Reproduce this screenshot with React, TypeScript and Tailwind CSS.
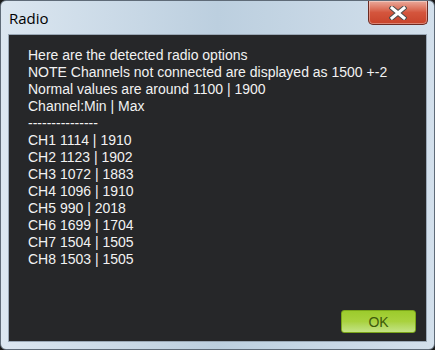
import React from 'react';

const lines = [
  'Here are the detected radio options',
  'NOTE Channels not connected are displayed as 1500 +-2',
  'Normal values are around 1100 | 1900',
  'Channel:Min | Max',
  '---------------',
  'CH1 1114 | 1910',
  'CH2 1123 | 1902',
  'CH3 1072 | 1883',
  'CH4 1096 | 1910',
  'CH5 990 | 2018',
  'CH6 1699 | 1704',
  'CH7 1504 | 1505',
  'CH8 1503 | 1505',
];

const CloseButton: React.FC = () => (
  <div className="w-[60px] h-[24px] rounded-b-[5px] border border-t-0 border-[#6b2a22] bg-gradient-to-b from-[#e9a99b] via-[#d4553d] to-[#c8432a] flex items-center justify-center shadow-[inset_0_0_0_1px_rgba(255,255,255,0.35)]">
    <svg width="18" height="14" viewBox="0 0 18 14">
      <path
        d="M3 2 L15 12 M15 2 L3 12"
        stroke="#4b4b4b"
        strokeWidth="5"
        strokeLinecap="square"
      />
      <path
        d="M3 2 L15 12 M15 2 L3 12"
        stroke="#ffffff"
        strokeWidth="3"
        strokeLinecap="square"
      />
    </svg>
  </div>
);

export default function App() {
  return (
    <div className="w-[435px] h-[350px] bg-[#1b1b1b]">
      <div className="w-full h-full rounded-[6px] border border-[#5f6b78] bg-gradient-to-r from-[#dbe6f0] via-[#bccfdf] to-[#d3e0ec] flex flex-col px-[7px] pb-[7px]">
        <div className="h-[33px] flex items-start justify-between shrink-0">
          <span className="mt-[8px] ml-[1px] text-[15px] text-black font-['Open_Sans','Liberation_Sans',sans-serif] leading-[18px]">
            Radio
          </span>
          <div className="mr-[-1px]">
            <CloseButton />
          </div>
        </div>
        <div className="flex-1 border border-[#9aa8b6] bg-[#262729] flex flex-col pl-[19px] pr-[10px] pt-[12px] pb-[8px]">
          <div className="flex flex-col font-['Liberation_Sans',Arial,sans-serif] text-[14px] leading-[17px] text-[#f2f2f2]">
            {lines.map((line, i) => (
              <div key={i}>{line}</div>
            ))}
          </div>
          <div className="mt-auto flex justify-end">
            <button className="w-[75px] h-[23px] rounded-[3px] border border-[#7aa51a] bg-gradient-to-b from-[#9ccb2c] via-[#a9d23e] to-[#c4e384] text-[14px] leading-[20px] text-[#3e5a0a] font-['Liberation_Sans',Arial,sans-serif]">
              OK
            </button>
          </div>
        </div>
      </div>
    </div>
  );
}
